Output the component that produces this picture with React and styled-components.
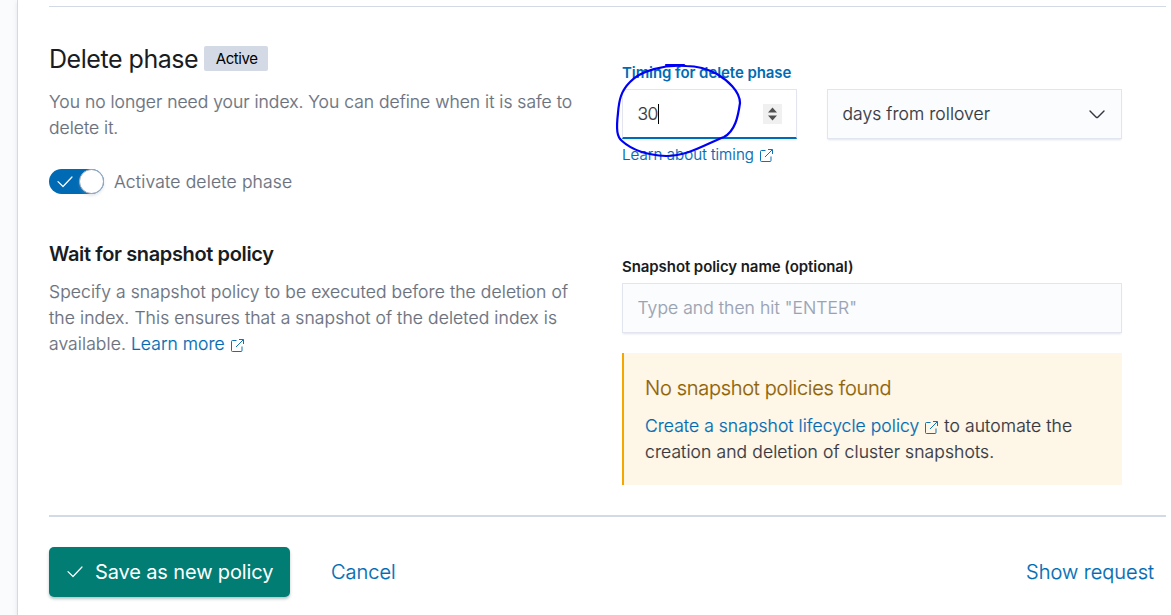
import React from "react";
import styled, { createGlobalStyle } from "styled-components";

const GlobalStyle = createGlobalStyle`
  *, *::before, *::after { box-sizing: border-box; }
  body {
    margin: 0;
    background: #fafbfd;
    color: #343741;
    font-family: Inter, "Liberation Sans", sans-serif;
    font-size: 17.5px;
    font-weight: 300;
    line-height: 26px;
    letter-spacing: 0;
    overflow: hidden;
  }
  h2, h3, h4, p { margin: 0; }
`;

const Page = styled.div`
  display: flex;
  height: 615px;
  padding-left: 17px;
  overflow: hidden;
`;

const Panel = styled.main`
  flex: 1;
  display: flex;
  flex-direction: column;
  padding: 6px 5px 0 31px;
  background: #fff;
  border-left: 1px solid #d3dae6;
  box-shadow: 0 2px 4px rgba(152, 162, 179, 0.25);
`;

const Rule = styled.hr`
  width: 100%;
  height: ${(p) => p.$size}px;
  margin: 0;
  border: 0;
  background: #d3dae6;
  flex: none;
`;

const Section = styled.section`
  display: grid;
  grid-template-columns: 573px 500px;
  height: ${(p) => p.$height}px;
`;

const Column = styled.div`
  padding-top: ${(p) => p.$top}px;
`;

const TitleRow = styled.div`
  display: flex;
  align-items: center;
  gap: 6px;
  height: 30px;
`;

const PhaseTitle = styled.h2`
  color: #1a1c21;
  font-size: 25px;
  font-weight: 400;
  line-height: 30px;
  letter-spacing: -0.46px;
  white-space: nowrap;
`;

const Badge = styled.span`
  width: 64px;
  height: 25px;
  margin-top: -2px;
  padding-left: 1px;
  border-radius: 2px;
  background: #d3dae6;
  color: #000;
  font-size: 15px;
  font-weight: 400;
  line-height: 25px;
  letter-spacing: -0.4px;
  text-align: center;
`;

const Description = styled.p`
  margin-top: ${(p) => p.$top}px;
  color: #69707d;
  -webkit-text-stroke: 0.2px;
  letter-spacing: ${(p) => p.$spacing}px;
  white-space: nowrap;
`;

const SwitchRow = styled.div`
  display: flex;
  align-items: center;
  gap: 10px;
  margin-top: 28px;
  height: 25px;
  color: #69707d;
  -webkit-text-stroke: 0.2px;
  letter-spacing: 0.17px;
`;

const SwitchTrack = styled.span`
  display: flex;
  align-items: center;
  justify-content: space-between;
  width: 55px;
  height: 25px;
  padding-left: 8px;
  border-radius: 13px;
  background: #006bb4;
`;

const SwitchThumb = styled.span`
  width: 25px;
  height: 25px;
  border: 1px solid #98a9bd;
  border-radius: 50%;
  background: #fff;
  box-shadow: 0 2px 3px rgba(152, 162, 179, 0.25);
`;

const SectionTitle = styled.h3`
  color: #1a1c21;
  font-size: 20px;
  font-weight: 600;
  line-height: 26px;
  letter-spacing: -0.37px;
`;

const Link = styled.a`
  color: #006bb4;
  font-size: ${(p) => p.$size || 17.5}px;
  letter-spacing: 0.05px;
  -webkit-text-stroke: 0.2px;
  svg { margin: 0 1px 0 6px; vertical-align: -2px; }
`;

const Label = styled.div`
  color: ${(p) => (p.$focused ? "#006bb4" : "#1a1c21")};
  font-size: 15px;
  font-weight: 600;
  line-height: 20px;
  letter-spacing: -0.075px;
`;

const TimingFields = styled.div`
  position: relative;
  display: grid;
  grid-template-columns: 175px 295px;
  column-gap: 30px;
`;

const Field = styled.div`
  display: flex;
  align-items: center;
  justify-content: space-between;
  height: 50px;
  padding: 0 16px 0 14.5px;
  border: 1px solid #e2e5ef;
  background: ${(p) => (p.$focused ? "#fff" : "#fbfcfd")};
  box-shadow: 0 2px 2px -1px rgba(152, 162, 179, 0.3);
  letter-spacing: 0.06px;
  -webkit-text-stroke: 0.2px;
  ${(p) => p.$focused && "border-bottom: 2px solid #006bb4;"}
`;

const Value = styled.span`
  display: flex;
  align-items: center;
  letter-spacing: -0.6px;
`;

const Caret = styled.span`
  width: 1px;
  height: 20px;
  background: #000;
`;

const Spinner = styled.span`
  display: flex;
  align-items: center;
  justify-content: center;
  width: 19px;
  height: 20px;
  margin-right: -2px;
  background: #f0f0f0;
`;

const Placeholder = styled.span`
  color: #98a2b3;
`;

const HelpText = styled.div`
  margin-top: 5px;
  line-height: 20px;
`;

const Annotation = styled.svg`
  position: absolute;
  left: -12px;
  top: -31px;
  overflow: visible;
  pointer-events: none;
`;

const Callout = styled.div`
  height: 132px;
  margin-top: 20px;
  padding: 22px 21px;
  border-left: 2px solid #f5a700;
  background: #fef6e6;
  letter-spacing: 0.1px;
  -webkit-text-stroke: 0.2px;
  white-space: nowrap;
`;

const CalloutTitle = styled.h4`
  margin-bottom: 12px;
  color: #8e6207;
  font-size: 20px;
  font-weight: 300;
  line-height: 26px;
  letter-spacing: -0.29px;
`;

const Footer = styled.footer`
  display: flex;
  align-items: center;
  height: 50px;
  margin-top: 30px;
  padding-right: 12px;
`;

const SaveButton = styled.button`
  display: flex;
  align-items: center;
  gap: 12px;
  width: 241px;
  height: 50px;
  padding: 0 0 0 18px;
  border: 0;
  border-radius: 5px;
  background: #017d73;
  box-shadow: 0 2px 3px rgba(1, 70, 64, 0.3);
  color: #fff;
  font: inherit;
  font-size: 20px;
  font-weight: 400;
  letter-spacing: -0.13px;
  white-space: nowrap;
`;

const FlatButton = styled.button`
  margin-left: ${(p) => (p.$end ? "auto" : "41px")};
  padding: 0;
  border: 0;
  background: none;
  color: #006bb4;
  font: inherit;
  font-size: 20px;
  letter-spacing: 0;
  -webkit-text-stroke: 0.2px;
`;

const CheckIcon = () => (
  <svg width="16" height="12" viewBox="0 0 16 12" fill="none" stroke="#fff" strokeWidth="1.2" strokeLinecap="round" strokeLinejoin="round">
    <path d="M1 5.6 6 10.5 15 1" />
  </svg>
);

const ExternalIcon = () => (
  <svg width="13" height="13" viewBox="0 0 13 13" fill="none" stroke="#006bb4" strokeWidth="0.95">
    <path d="M5.5 1.5H1.5Q.5 1.5 .5 2.5v9q0 1 1 1H10q1 0 1-1V7.5M8 .5h4.5V5M12.2.8 5 8" />
  </svg>
);

export default function App() {
  return (
    <>
      <GlobalStyle />
      <Page>
        <Panel>
          <Rule $size={1} />
          <Section $height={234}>
            <Column $top={37}>
              <TitleRow>
                <PhaseTitle>Delete phase</PhaseTitle>
                <Badge>Active</Badge>
              </TitleRow>
              <Description $top={15} $spacing={0}>
                You no longer need your index. You can define when it is safe to
                <br />
                delete it.
              </Description>
              <SwitchRow>
                <SwitchTrack>
                  <CheckIcon />
                  <SwitchThumb />
                </SwitchTrack>
                <span>Activate delete phase</span>
              </SwitchRow>
            </Column>
            <Column $top={56}>
              <Label $focused>Timing for delete phase</Label>
              <TimingFields style={{ marginTop: 6 }}>
                <Field $focused>
                  <Value>
                    30
                    <Caret />
                  </Value>
                  <Spinner>
                    <svg width="9" height="14" viewBox="0 0 9 14" fill="#505050">
                      <path d="M0 5.5 4.5.5 9 5.5ZM0 8.5h9l-4.5 5Z" />
                    </svg>
                  </Spinner>
                </Field>
                <Field>
                  <span>days from rollover</span>
                  <svg width="16" height="9" viewBox="0 0 16 9" fill="none" stroke="#343741" strokeWidth="1.4" strokeLinecap="round" strokeLinejoin="round">
                    <path d="M1 1 7.2 7.2q.8.7 1.6 0L15 1" />
                  </svg>
                </Field>
                <Annotation width="130" height="105" viewBox="610 58 130 105" fill="none" stroke="#0000f5" strokeWidth="2.2" strokeLinecap="round" strokeLinejoin="round">
                  <path d="M666 65H684" />
                  <path d="M686 66C665 64 640 71 630 82C621 91 619 100 618 113C616 130 617 137 622 141C632 150 645 155 666 156C688 156 706 144 724 137C735 131 738 117 740 103C740 91 727 80 717 74C706 68 696 66 686 66" />
                </Annotation>
              </TimingFields>
              <HelpText>
                <Link $size={15.1}>
                  Learn about timing
                  <ExternalIcon />
                </Link>
              </HelpText>
            </Column>
          </Section>
          <Section $height={274}>
            <Column $top={0}>
              <SectionTitle>Wait for snapshot policy</SectionTitle>
              <Description $top={12} $spacing={0.09}>
                Specify a snapshot policy to be executed before the deletion of
                <br />
                the index. This ensures that a snapshot of the deleted index is
                <br />
                available. <Link>Learn more<ExternalIcon /></Link>
              </Description>
            </Column>
            <Column $top={16}>
              <Label>Snapshot policy name (optional)</Label>
              <Field style={{ marginTop: 6 }}>
                <Placeholder>Type and then hit "ENTER"</Placeholder>
              </Field>
              <Callout>
                <CalloutTitle>No snapshot policies found</CalloutTitle>
                <p>
                  <Link>Create a snapshot lifecycle policy<ExternalIcon /></Link> to automate the
                  <br />
                  creation and deletion of cluster snapshots.
                </p>
              </Callout>
            </Column>
          </Section>
          <Rule $size={2} />
          <Footer>
            <SaveButton>
              <CheckIcon />
              Save as new policy
            </SaveButton>
            <FlatButton>Cancel</FlatButton>
            <FlatButton $end>Show request</FlatButton>
          </Footer>
        </Panel>
      </Page>
    </>
  );
}
